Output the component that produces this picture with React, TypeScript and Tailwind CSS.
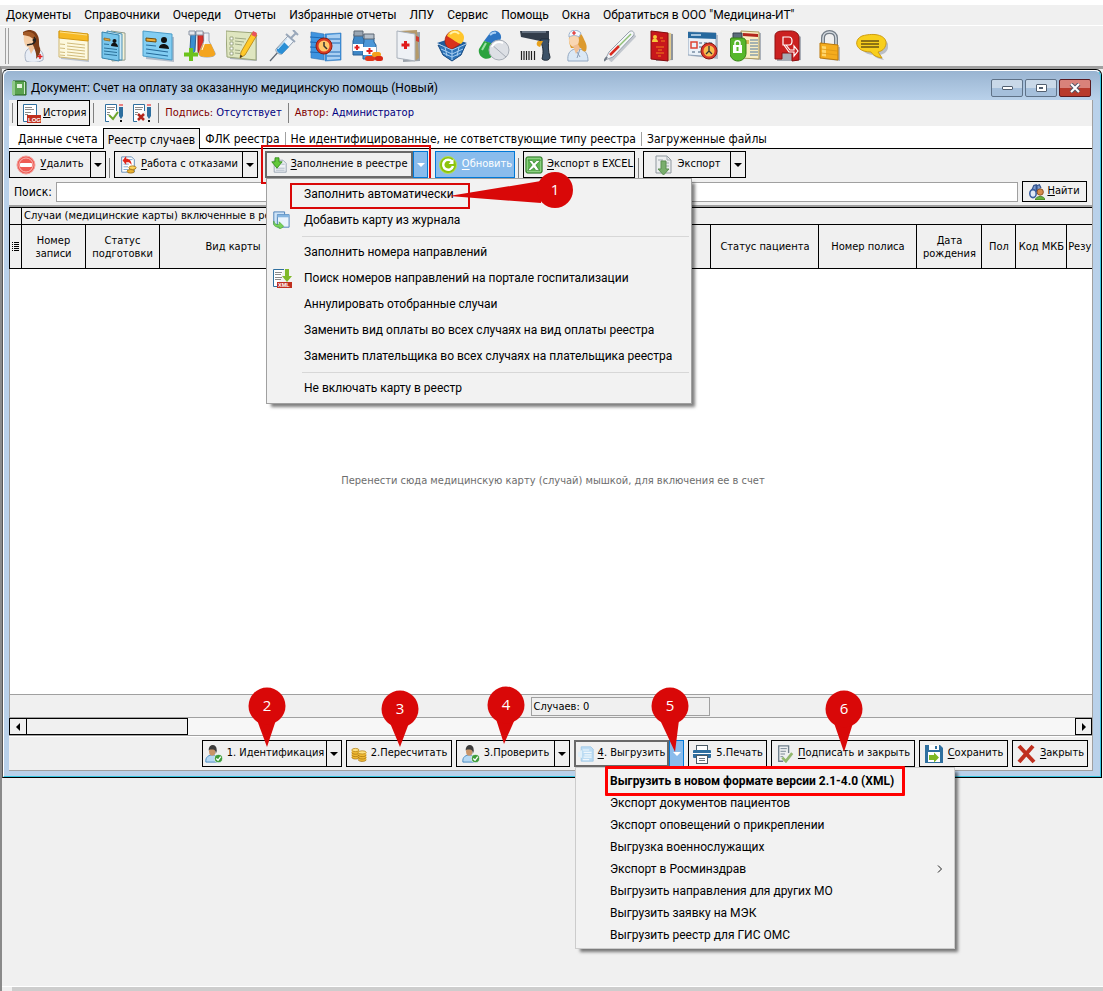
import type { ReactNode } from 'react';
import clsx from 'clsx';

const UI_FONT = "font-['Roboto','Open_Sans',sans-serif]";
const FORM_FONT = "font-['DejaVu_Sans_Condensed','DejaVu_Sans',sans-serif]";

const MENU = [
    'Документы',
    'Справочники',
    'Очереди',
    'Отчеты',
    'Избранные отчеты',
    'ЛПУ',
    'Сервис',
    'Помощь',
    'Окна',
    'Обратиться в ООО "Медицина-ИТ"',
];

/* ---------- main toolbar icons, 32x32 ---------- */

const TOOLBAR: { title: string; art: ReactNode }[] = [
    {
        title: 'Регистратура',
        art: (
            <>
                <path d="M10 31c-2-6-1-11 4-13l7 1c5 1 7 5 6 11-5 3-13 3-17 1z" fill="#e8edf5" stroke="#a9b4c6" />
                <path d="M12 16l3 8 4-7-1-4h-5z" fill="#f2c49c" />
                <path d="M7 2c6-4 13-2 15 4 2 5 0 8 2 12 1 4-1 8-4 11 1-5-1-8-2-12-2-3-2-9-3-11L7 5z" fill="#7b3c17" />
                <path d="M8 5c3-2 8-1 9 3 1 5-2 9-5 9s-5-6-4-12z" fill="#f6cfa8" />
                <path d="M7 3c6-3 12 0 13 5l-2 4c0-4-4-6-11-7z" fill="#a35a28" />
                <path d="M18 7c3 3 1 6-2 7l-5 1" fill="none" stroke="#222" strokeWidth="1.500" />
                <circle cx="18" cy="10" r="1.500" fill="#222" />
                <path d="M24 24v5M21.500 26.500h5" stroke="#e02020" strokeWidth="1.500" />
            </>
        ),
    },
    {
        title: 'Журнал',
        art: (
            <>
                <path d="M2 3l29 3v26L3 29z" fill="#b9c2cf" />
                <path d="M1 1l29 3v26L1 27z" fill="#fdf9df" stroke="#cfb670" />
                <path d="M1 1l29 3v7L1 8z" fill="#f7b923" stroke="#d79a12" />
                <path d="M2 2l27 3" stroke="#fde08a" />
                <path d="M2 14l5 .5M2 18l5 .5M2 22l5 .5M2 25l5 .5M9 13l18 2M9 16l18 2M9 19l18 2M9 22l18 2M9 25l18 2" stroke="#c5ab62" strokeWidth=".8" />
            </>
        ),
    },
    {
        title: 'Карты пациентов',
        art: (
            <>
                <path d="M11 1l14 2v27l-13 1z" fill="#f7f3d8" stroke="#8e9a8c" />
                <path d="M7 1l15 3v26L8 29z" fill="#cdeaf7" stroke="#4a8fb3" />
                <path d="M2 2l17 3v26L2 28z" fill="#79c6ec" stroke="#3784ad" />
                <path d="M4 8l6 1v2L4 10z" fill="#e6a73b" stroke="#875b13" strokeWidth=".7" />
                <circle cx="14.500" cy="11" r="2" fill="#111" />
                <path d="M11 16c0-5 7-4 7 1z" fill="#111" />
                <path d="M4 14l5 .5M4 18l13 1.500M4 21l13 1.500M4 24l13 1.500" stroke="#2b7199" />
            </>
        ),
    },
    {
        title: 'Карточка',
        art: (
            <>
                <path d="M3 4l29 3v25L4 29z" fill="#b0bbc9" />
                <path d="M1 1l29 3v26L1 26z" fill="#82cdf2" stroke="#4b9cc8" />
                <path d="M4 8l10 1v3L4 11z" fill="#f0ad36" stroke="#704a08" />
                <path d="M4 15l10 1M4 19l22 3M4 23l22 3" stroke="#266b9b" strokeWidth="1.200" />
                <circle cx="22" cy="10" r="3" fill="#111" />
                <path d="M17 18c0-6 10-5 10 1z" fill="#111" />
            </>
        ),
    },
    {
        title: 'Лаборатория',
        art: (
            <>
                <path d="M7 2h5l-1 18c0 4-5 3-5 0z" fill="#3a8fd0" stroke="#2b5f91" />
                <path d="M14 2h5l1 19c0 4-6 4-6 0z" fill="#d9302a" stroke="#8f1a17" />
                <path d="M5 1h6v4H5zM12 1h7v4h-7z" fill="#e5e8ee" stroke="#8d96a5" />
                <path d="M20 3h5v8l6 12c1 3-3 4-8 4s-9-1-8-4l5-12z" fill="#e9edf4" stroke="#9aa4b5" />
                <path d="M19 14h8l4 9c1 3-3 4-8 4s-9-1-8-4z" fill="#f4a51e" />
                <path d="M21 4v8l-3 8" fill="none" stroke="#fff" />
                <path d="M7 18v13M0 24.500h14" stroke="#6cc31d" strokeWidth="4" />
            </>
        ),
    },
    {
        title: 'Запись',
        art: (
            <>
                <path d="M3 4l28 1v26L4 29z" fill="#b0b6bd" />
                <path d="M0 1l30 2v27L1 27z" fill="#dfe6c0" stroke="#9ba679" />
                <path d="M4 7h3v3H4zM4 12h3v3H4zM4 17h3v3H4zM4 22h3v3H4z" fill="#fff" stroke="#8c9770" strokeWidth=".8" />
                <path d="M9 8l11 1M9 11l9 1M9 14l7 1M9 20l5 .5M9 23l5 .5" stroke="#9da885" />
                <path d="M26 3l5 2-12 20-5 3 1-6z" fill="#ffc928" stroke="#b37f10" strokeWidth=".8" />
                <path d="M27 1l4 2-1.500 4-4-2z" fill="#e9535c" />
                <path d="M14 28l.5-3 2 1z" fill="#222" />
            </>
        ),
    },
    {
        title: 'Процедуры',
        art: (
            <>
                <path d="M2 31l9-10" stroke="#5c6773" strokeWidth="1.200" />
                <path d="M8 19L20 6l6 5-12 13c-3 1-7-2-6-5z" fill="#eef4fa" stroke="#8c9aab" />
                <path d="M9 19l7-7 5 5-7 7c-3 0-6-3-5-5z" fill="#2a8fd6" />
                <path d="M10 19l9-10" stroke="#c7e4f8" />
                <path d="M23 8l5-5M25 0l5 5M18 4l9 8" stroke="#9aa8ba" strokeWidth="2" />
            </>
        ),
    },
    {
        title: 'Расписание',
        art: (
            <>
                <path d="M1 2l13 2v26L1 28zM15 4l16-1v27l-16 1z" fill="#3f94e0" stroke="#3074b5" strokeWidth=".6" />
                <path d="M17 5l13-1v25l-13 1z" fill="#a9cff2" />
                <path d="M0 7l14 1M0 12l14 1M0 17l14 1M0 22l14 1M17 9h13M17 13h13M17 22h13M17 26h13" stroke="#1c68b4" />
                <circle cx="14" cy="16" r="8" fill="#d93b23" stroke="#8e1f10" />
                <circle cx="14" cy="16" r="5.500" fill="#ffc76a" />
                <path d="M14 12v4l3 3" fill="none" stroke="#333" strokeWidth="1.500" />
            </>
        ),
    },
    {
        title: 'Аптека',
        art: (
            <>
                <path d="M2 4h9v4l2 3v14H1V11l1-3z" fill="#3e87c6" stroke="#275f94" />
                <path d="M2 1h9v5H2z" fill="#9aa6b3" stroke="#5c6773" />
                <path d="M12 8h10v4l2 3v14H11V15l1-3z" fill="#4b97d8" stroke="#275f94" />
                <path d="M12 4h10v5H12z" fill="#b5bfca" stroke="#5c6773" />
                <path d="M1 14h10v7H1zM11 17h13v8H11z" fill="#fff" />
                <path d="M5 15v5M2.500 17.500h5M17.500 18v6M14.500 21h6" stroke="#e02020" strokeWidth="2" />
                <rect x="13" y="26" width="10" height="5" rx="2.500" fill="#e23a1c" />
                <rect x="20" y="22" width="9" height="5" rx="2.500" fill="#f5a01c" />
                <rect x="23" y="26" width="8" height="5" rx="2.500" fill="#d82716" />
            </>
        ),
    },
    {
        title: 'Медкарта',
        art: (
            <>
                <path d="M9 3l17-1v29l-17 1z" fill="#9aa1a9" />
                <path d="M5 1l18-1 2 28-4 3z" fill="#b49a6a" />
                <path d="M3 1l18 3v27L3 28z" fill="#eef1f5" stroke="#a8b0ba" />
                <path d="M22 6l3 1v5l-3-1z" fill="#d23a2c" />
                <path d="M11.500 11v8M7.500 15h8" stroke="#e01b1b" strokeWidth="3" />
            </>
        ),
    },
    {
        title: 'Заказ лекарств',
        art: (
            <>
                <path d="M2 15l14 4 14-5-5 11-9 6-9-6z" fill="#2e74b8" stroke="#184a80" />
                <path d="M1 13l15-5 15 5-15 7z" fill="#1f5c9c" />
                <path d="M9 11c0-8 8-13 15-9 5 4 2 9-1 13l-7 4c-4 0-7-4-7-8z" fill="#d8311c" stroke="#982012" strokeWidth=".7" />
                <path d="M11 6c3-7 10-7 14-4s4 8 0 12c-4-1-7-4-14-8z" fill="#ffc62c" />
                <path d="M14 4c3-3 7-3 9 0" fill="none" stroke="#fff1a8" strokeWidth="2" />
                <path d="M2 14l14 6 14-6M5 19l11 5 11-5M7 23l9 4 9-4M16 19v11M9 17l2 9M23 17l-2 9" fill="none" stroke="#a6cdf0" />
            </>
        ),
    },
    {
        title: 'Медикаменты',
        art: (
            <>
                <path d="M6 11L12 3c4-5 12-1 11 5l-3 8z" fill="#2d75c3" />
                <path d="M1 19L6 11l14 4-5 10C10 33-1 27 1 19z" fill="#2aa33d" />
                <path d="M4 20l4-7" stroke="#9be1a4" strokeWidth="2" />
                <path d="M12 5c2-2 4-3 6-2" fill="none" stroke="#a8cff4" strokeWidth="2" />
                <circle cx="21" cy="20" r="10" fill="#dde0e5" stroke="#a7adb6" />
                <path d="M13 14l15 13" stroke="#a4aab3" />
                <path d="M14 17c2-5 7-6 11-4" fill="none" stroke="#fff" strokeWidth="2" />
            </>
        ),
    },
    {
        title: 'Сканер',
        art: (
            <>
                <path d="M0 1h29v8l-9 2L1 7z" fill="#333d4a" />
                <path d="M2 2h24" stroke="#788594" strokeWidth="1.500" />
                <path d="M21 9h8c-1 6-1 12 1 18 0 4-6 4-8 2 2-8 1-13-2-18z" fill="#3c5268" stroke="#1f2b38" />
                <path d="M18 11c-2 2-2 5 2 6l3-6z" fill="#e7a11d" />
                <path d="M1.500 21v9M4 21v9M6.500 21v9M9 21v9M11.500 21v9M14.500 21v9" stroke="#222" strokeWidth="1.200" />
            </>
        ),
    },
    {
        title: 'Медсестра',
        art: (
            <>
                <path d="M6 31c-1-7 2-11 7-12h5c6 1 8 6 8 12z" fill="#dbe8f5" stroke="#92a8c2" />
                <path d="M8 4c5-4 11-2 13 3s5 8 3 14c-2 1-4 0-5-3H9C7 13 6 8 8 4z" fill="#dc9a2f" />
                <ellipse cx="12" cy="10" rx="5" ry="7" fill="#f9d6b2" />
                <path d="M11 16l3 8 4-6-2-4z" fill="#f0bf95" />
                <path d="M7 7C6 0 14-2 19 3l-2 4c-3-2-6-2-10 0z" fill="#f5f9ff" stroke="#9db3ce" />
                <path d="M12 1v4M10 3h4" stroke="#e02020" strokeWidth="1.200" />
                <path d="M15 22l3 5M18 19l-3 9" stroke="#8c9fb9" />
            </>
        ),
    },
    {
        title: 'Термометр',
        art: (
            <>
                <path d="M6 31L31 5" stroke="#c2c7ce" strokeWidth="4" />
                <path d="M1 30l4-8L25 2c3-3 7 1 4 4L9 27z" fill="#f3f6f9" stroke="#98a1ad" />
                <path d="M6 25l9-9" stroke="#d92b20" strokeWidth="2.500" />
                <path d="M15 16L27 4" stroke="#8fbf74" strokeWidth="1.500" />
                <path d="M0 31l3-4" stroke="#6e7782" strokeWidth="2" />
            </>
        ),
    },
    {
        title: 'Справочник МКБ',
        art: (
            <>
                <path d="M8 2l19 2v26l-17 1z" fill="#8f949b" />
                <path d="M7 1l18 2v26l-2 2z" fill="#e0c98e" />
                <path d="M5 1l17 2v28L5 29z" fill="#c8171b" stroke="#850d10" />
                <circle cx="9" cy="7" r="2" fill="#f6c93c" />
                <path d="M6 12c0-5 6-4 6 0z" fill="#f6c93c" />
                <path d="M14 8h3M15 11h4M10 17h8M12 20h4M10 23h8M12 26h3" stroke="#f0801a" />
            </>
        ),
    },
    {
        title: 'Календарь',
        art: (
            <>
                <path d="M2 3l28 2v24L3 26z" fill="#b4bdc9" />
                <path d="M0 2l28 1v24L0 25z" fill="#eaf1f8" stroke="#8ea2b8" />
                <path d="M0 2l28 1v6L0 8z" fill="#27699e" />
                <path d="M3 5h10" stroke="#cfe3f3" strokeWidth="1.500" />
                <path d="M3 12h6v6H3z" fill="none" stroke="#de4433" strokeWidth="1.500" />
                <path d="M11 13h3M16 13h3M21 13h3M11 17h3M4 22h3M10 22h3" stroke="#7a8ea4" strokeWidth="1.500" />
                <circle cx="21" cy="21" r="8" fill="#d8372a" stroke="#871a12" />
                <circle cx="21" cy="21" r="5.500" fill="#f7bd4d" />
                <path d="M21 16v5l3 3M21 21l-3 3" fill="none" stroke="#333" strokeWidth="1.300" />
            </>
        ),
    },
    {
        title: 'Доступ к документам',
        art: (
            <>
                <path d="M12 3h19v27l-18-2z" fill="#aab0b9" />
                <path d="M11 1l18 1v27l-18-1z" fill="#f9edc2" stroke="#ab995e" />
                <path d="M13 3l15 1v3l-15-1z" fill="#b3261d" />
                <path d="M14 10h5v4h-5z" fill="#ddb458" />
                <path d="M20 10h8M20 13h8M20 16h8M20 19h8M20 22h8M20 25h8" stroke="#52799f" strokeWidth="1.200" />
                <path d="M3 3h9v6H3z" fill="#5c6c7a" stroke="#34414e" />
                <path d="M1 8h11c3 0 4 2 4 4v11c0 4-3 8-8 8s-8-4-8-8V11z" fill="#58b72b" stroke="#358213" />
                <path d="M3 15h9v8H3z" fill="#fff" />
                <path d="M5 15v-2c0-3 5-3 5 0v2" fill="none" stroke="#fff" strokeWidth="1.500" />
                <path d="M7.500 17v4" stroke="#58b72b" strokeWidth="2" />
            </>
        ),
    },
    {
        title: 'Реестр',
        art: (
            <>
                <path d="M5 31V8l7-6h11l6 5v23l-6 1z" fill="#a8adb6" />
                <path d="M3 29V6c0-4 4-5 8-5h8c5 0 8 3 8 7v22l-7 1v-8H10v6z" fill="#cb2020" stroke="#8f1010" />
                <path d="M11 13V7h6c4 0 4 8 0 8h-6v-2M14 15l4 5h4v-4l4 5-4 5v-4h-5l-5-7" fill="none" stroke="#fff" strokeWidth="1.200" />
            </>
        ),
    },
    {
        title: 'Блокировка',
        art: (
            <>
                <path d="M9 14V8c0-8 13-8 13 0v7" fill="none" stroke="#737c86" strokeWidth="4" />
                <path d="M9 14V8c0-8 13-8 13 0v7" fill="none" stroke="#d5dbe1" strokeWidth="1.500" />
                <path d="M8 15l18 2v14l-17-2z" fill="#b3b9c1" />
                <path d="M6 13l18 2v15L6 28z" fill="#f5ac1d" stroke="#bd7909" />
                <path d="M8 16l4 .5v10L8 26z" fill="#ffd66a" />
                <path d="M7 19l16 2M7 23l16 2" stroke="#dd9715" strokeWidth=".8" />
            </>
        ),
    },
    {
        title: 'Сообщения',
        art: (
            <>
                <path d="M8 8c16-4 26 2 24 10-1 4-4 6-8 7l4 5c-6-1-9-3-11-5C4 24 0 12 8 8z" fill="#b9bec7" />
                <path d="M6 6C20 2 31 6 30 14c-1 5-4 7-8 8l4 6c-6-1-9-3-11-6C-1 22-3 10 6 6z" fill="#f8cf1d" stroke="#cf9d10" />
                <path d="M5 11h18M5 14h18M5 17h18" stroke="#6b5510" strokeWidth="1.500" />
            </>
        ),
    },
];

/* ---------- small icons, drawn on a 20x20 grid ---------- */

function Svg({ children, className = 'size-5' }: { children: ReactNode; className?: string }) {
    return (
        <svg viewBox="0 0 20 20" className={clsx('shrink-0', className)} aria-hidden="true">
            {children}
        </svg>
    );
}

function LogIcon() {
    return (
        <Svg>
            <path d="M15.500 12V1.500h-13v17H7" fill="#fff" stroke="#2f6f9f" />
            <path d="M4 4.500h7M4 6.500h9M4 9.500h6M4 11.500h3" stroke="#8a8a8a" />
            <rect x="6" y="12" width="14" height="8" fill="#c0301f" />
            <text x="7" y="18.500" fontSize="6" fontWeight="700" fontFamily="Liberation Sans" fill="#fff">LOG</text>
        </Svg>
    );
}

function SignIcon({ ok }: { ok: boolean }) {
    return (
        <Svg>
            <path d="M12.500 8V1.500h-11v17H5" fill="#fff" stroke="#2f6f9f" />
            <path d="M3 4.500h8M3 6.500h7M3 9.500h3M3 11.500h2" stroke="#8a8a8a" />
            {ok ? (
                <path d="M5 12l4 4 5-7" fill="none" stroke="#6da52c" strokeWidth="2" />
            ) : (
                <path d="M6 11l6 6M12 11l-6 6" stroke="#b3261d" strokeWidth="2.500" />
            )}
            <path d="M15 1h4v2h-4z" fill="#e98080" />
            <path d="M15 4h4v9l-2 3-2-3z" fill="#2e6f9f" />
            <rect x="16" y="17" width="2" height="2" fill="#111" />
        </Svg>
    );
}

function DeleteIcon() {
    return (
        <Svg>
            <circle cx="10" cy="10" r="9" fill="#ee5c55" stroke="#f3a09b" />
            <circle cx="10" cy="10" r="7" fill="none" stroke="#f7b5b1" />
            <rect x="4" y="8" width="12" height="4" rx="1" fill="#fff" />
        </Svg>
    );
}

function RefusalIcon() {
    return (
        <Svg className="size-[18px]">
            <path d="M3 1h11l3 3v14H3z" fill="#fff" stroke="#5b87b5" />
            <path d="M5 9h6M5 12h5M5 15h5M11 4h4" stroke="#7aa2cc" />
            <path d="M4 5l4-5v3c4 0 6 3 6 7-2-3-3-3-6-3v3z" fill="#e0261c" />
            <ellipse cx="13" cy="17" rx="4" ry="2" fill="#eab22d" stroke="#a6741a" />
            <ellipse cx="15" cy="13" rx="4" ry="2" fill="#ffd65c" stroke="#a6741a" />
        </Svg>
    );
}

function FillIcon() {
    return (
        <Svg className="size-4">
            <path d="M4 4h11l4 4v11H4z" fill="#eef1f5" stroke="#8b98a8" />
            <path d="M6 14h11M6 16.500h11M13 9h4" stroke="#a3aebb" />
            <path d="M5 1h5v5h4l-6.500 8L1 6h4z" fill="#62c83a" stroke="#2b8513" />
        </Svg>
    );
}

function RefreshIcon() {
    return (
        <Svg>
            <circle cx="10" cy="10" r="8.500" fill="#8cc40c" stroke="#b5dd5c" />
            <path d="M14 6.500A5 5 0 1 0 15 11" fill="none" stroke="#fff" strokeWidth="2.500" />
            <path d="M15.500 4v5h-5z" fill="#fff" />
        </Svg>
    );
}

function ExcelIcon() {
    return (
        <Svg className="size-[18px]">
            <rect x="1" y="1" width="18" height="18" rx="2" fill="#5cb350" stroke="#1b6914" />
            <rect x="2.500" y="2.500" width="15" height="15" rx="1" fill="none" stroke="#a4dc9b" />
            <path d="M4 5h4l2 3 3-3h4l-5 5 4 6h-4l-2-3-4 3H3l5-6z" fill="#fff" stroke="#1b6914" strokeWidth=".6" />
        </Svg>
    );
}

function ExportIcon() {
    return (
        <Svg>
            <path d="M2 1h11l4 4v13H2z" fill="#eceeef" stroke="#8f979e" />
            <path d="M13 1v4h4M4 5h5M12 8h3M12 11h3" fill="none" stroke="#a1a9b0" />
            <path d="M7 6h5v8h3l-5.500 6L4 14h3z" fill="#79ae6d" stroke="#5d8f53" />
        </Svg>
    );
}

function FindIcon() {
    return (
        <Svg className="size-4">
            <path d="M3 9l3-7 3-1v9M10 9V2l3-1 2 4" fill="#7b9bd0" stroke="#34548e" strokeWidth="1.500" />
            <ellipse cx="5" cy="12" rx="4" ry="5" fill="#dfe8f5" stroke="#3a5fa0" strokeWidth="2" />
            <circle cx="14" cy="10" r="4" fill="#d68b4b" stroke="#7c4217" />
            <path d="M8 20c0-6 12-6 12 0z" fill="#67b03b" stroke="#35701a" />
        </Svg>
    );
}

function CopyIcon() {
    return (
        <Svg className="size-[18px]">
            <path d="M2 1h12v14H2z" fill="#cfe4f7" stroke="#447bb3" />
            <path d="M6 4h13v14H6z" fill="#eaf4fd" stroke="#447bb3" />
            <path d="M6 4h13v3H6z" fill="#85b5e0" />
            <path d="M2 11c1 4 3 4 6 4v-3l5 5-5 4v-3c-5 0-7-2-6-7z" fill="#79d35b" stroke="#3f9a28" strokeWidth=".6" />
        </Svg>
    );
}

function XmlIcon() {
    return (
        <Svg>
            <path d="M12 1.500H1.500v17H5" fill="#fff" stroke="#2f6f9f" />
            <path d="M3 4.500h7M3 6.500h6M3 9.500h7M3 11.500h6" stroke="#8a8a8a" />
            <path d="M13 1h4v7h3l-5 6-5-6h3z" fill="#80b92a" />
            <rect x="5" y="14" width="15" height="6" fill="#c0301f" />
            <text x="6" y="19" fontSize="5.500" fontWeight="700" fontFamily="Liberation Sans" fill="#fff">XML</text>
        </Svg>
    );
}

function UserCheckIcon() {
    return (
        <Svg className="size-[18px]">
            <path d="M1 19c-1-6 4-8 7-8s7 1 9 8z" fill="#b5d8f3" stroke="#3f86c0" />
            <ellipse cx="8" cy="7" rx="3.500" ry="5" fill="#c99467" />
            <path d="M4 6c0-8 10-8 9 1l-1 3c0-4-1-5-4-5-2 0-3 0-4 1z" fill="#3c3c3c" />
            <circle cx="15" cy="15" r="4.500" fill="#3d9c3a" stroke="#fff" strokeWidth=".7" />
            <path d="M12.500 15l2 2 3-4" fill="none" stroke="#fff" strokeWidth="1.500" />
        </Svg>
    );
}

function CoinsIcon() {
    return (
        <Svg className="size-4">
            <path d="M1 5v9c0 3 9 3 9 0V5z" fill="#f0ba34" />
            <path d="M9 8v9c0 3 10 3 10 0V8z" fill="#f0ba34" />
            <path d="M1 8c0 3 9 3 9 0M1 11c0 3 9 3 9 0M1 14c0 3 9 3 9 0M9 11c0 3 10 3 10 0M9 14c0 3 10 3 10 0M9 17c0 3 10 3 10 0" fill="none" stroke="#a8740f" />
            <ellipse cx="5.500" cy="5" rx="4.500" ry="2" fill="#ffe281" stroke="#b98517" />
            <ellipse cx="14" cy="8" rx="5" ry="2" fill="#ffe281" stroke="#b98517" />
        </Svg>
    );
}

function UploadIcon() {
    return (
        <Svg className="size-4">
            <path d="M4 1h12l3 3v15H4z" fill="#bcdcf3" stroke="#9cc6e6" />
            <path d="M6 5h8M7 8h10M8 11h9M7 14h10M6 17h8" stroke="#eef7fd" strokeWidth="1.500" />
            <path d="M0 8l5-3v10l-5-2z" fill="#e0f0fa" />
        </Svg>
    );
}

function PrinterIcon() {
    return (
        <Svg>
            <rect x="4.500" y="1.500" width="11" height="6" fill="#fff" stroke="#4c5b66" />
            <rect x="1" y="6" width="18" height="8" rx="1" fill="#2e6f9f" />
            <rect x="4.500" y="11.500" width="11" height="8" fill="#fff" stroke="#4c5b66" />
            <path d="M7 14.500h6M7 16.500h6" stroke="#6b7780" />
            <path d="M1 9.500h18" stroke="#fff" />
        </Svg>
    );
}

function SignCloseIcon() {
    return (
        <Svg className="size-[18px]">
            <path d="M14 9V1H3v17h5" fill="#eef0f1" stroke="#6f7f8b" strokeWidth="1.500" />
            <path d="M5 4h7M5 7h6M5 10h5M5 13h3" stroke="#6f7f8b" />
            <path d="M7 14l4 4 7-9" fill="none" stroke="#93b86f" strokeWidth="3" />
        </Svg>
    );
}

function SaveIcon() {
    return (
        <Svg>
            <path d="M1 1h15l3 3v15H1z" fill="#2e6f9f" />
            <rect x="5" y="1" width="10" height="5" fill="#fff" />
            <rect x="11" y="2" width="2" height="3" fill="#2e6f9f" />
            <rect x="4" y="8" width="12" height="10" fill="#fff" />
            <path d="M5 11h5V8.500l5 5-5 5V16H5z" fill="#7eb824" />
        </Svg>
    );
}

function CrossIcon() {
    return (
        <Svg>
            <path d="M3 2l15 16M17 2L3 18" stroke="#c0301f" strokeWidth="4" />
        </Svg>
    );
}

/* ---------- building blocks ---------- */

function Arrow({ className }: { className?: string }) {
    return (
        <svg viewBox="0 0 8 4" className={clsx('w-2 h-1', className)} aria-hidden="true">
            <path d="M0 0h8L4 4z" fill="currentColor" />
        </svg>
    );
}

interface FormButtonProps {
    icon: ReactNode;
    accel?: string;
    label: string;
    split?: boolean;
    /** menu of the split half is open */
    open?: boolean;
    hot?: boolean;
    className?: string;
    children?: ReactNode;
}

function FormButton({ icon, accel, label, split, open, hot, className, children }: FormButtonProps) {
    return (
        <div className={clsx('relative flex h-[27px] shrink-0', className)}>
            <button
                className={clsx(
                    'flex flex-1 items-center justify-center gap-1 whitespace-nowrap border',
                    open ? 'border-2 border-[#696969]' : hot ? 'border-[#0078d7] bg-[#8abcec] text-white' : 'border-black'
                )}
            >
                {icon}
                <span>
                    {accel && <u className="underline-offset-2">{accel}</u>}
                    {label}
                </span>
            </button>
            {split && (
                <button
                    aria-label={`${accel ?? ''}${label}: меню`}
                    className={clsx(
                        'flex w-[15px] items-center justify-center border',
                        open ? 'border-[#0078d7] bg-[#8abcec] text-white' : 'border-l-0 border-black'
                    )}
                >
                    <Arrow />
                </button>
            )}
            {children}
        </div>
    );
}

function Separator() {
    return <div className="mx-[3px] h-5 w-px shrink-0 bg-[#808080]" />;
}

/** Numbered marker; `reach` and `lean` place the tip relative to the circle's centre. */
function Pin({ n, className, reach, lean = 0 }: { n: number; className: string; reach: number; lean?: number }) {
    return (
        <svg viewBox="0 0 38 66" className={clsx('pointer-events-none absolute z-30 h-[66px] w-[38px]', className)}>
            <path d={`M9 33L${19 + lean} ${19 + reach} 28 33z`} fill="#d90808" />
            <circle cx="19" cy="19" r="18.500" fill="#d90808" />
            <text x="19" y="24" textAnchor="middle" fontSize="15" fontFamily="Open Sans" fill="#fff">
                {n}
            </text>
        </svg>
    );
}

const FILL_MENU: ({ label: string; icon?: ReactNode } | null)[] = [
    { label: 'Заполнить автоматически' },
    { label: 'Добавить карту из журнала', icon: <CopyIcon /> },
    null,
    { label: 'Заполнить номера направлений' },
    { label: 'Поиск номеров направлений на портале госпитализации', icon: <XmlIcon /> },
    { label: 'Аннулировать отобранные случаи' },
    { label: 'Заменить вид оплаты во всех случаях на вид оплаты реестра' },
    { label: 'Заменить плательщика во всех случаях на плательщика реестра' },
    null,
    { label: 'Не включать карту в реестр' },
];

function FillMenu() {
    return (
        <div
            className={clsx(
                'absolute left-px top-[27px] z-20 w-[426px] border border-[#a0a0a0] bg-[#f2f2f2] py-[2px] text-xs shadow-[4px_4px_3px_-1px_rgba(0,0,0,0.5)]',
                UI_FONT
            )}
        >
            {FILL_MENU.map((item, i) =>
                item ? (
                    <button key={item.label} className="flex h-[26px] w-full items-center whitespace-nowrap text-left">
                        <span className="flex w-[37px] items-center pl-[5px]">{item.icon}</span>
                        {item.label}
                    </button>
                ) : (
                    <div key={i} className="ml-[35px] mr-[2px] flex h-[6px] items-center">
                        <div className="h-px flex-1 bg-[#d7d7d7]" />
                    </div>
                )
            )}
            <div className="pointer-events-none absolute left-[23px] top-1 h-[26px] w-[180px] border-2 border-[#d90808]" />
            <svg viewBox="0 0 126 38" className="pointer-events-none absolute -top-2 left-[182px] h-[38px] w-[126px]">
                <path d="M0 25L92 10v22z" fill="#d90808" />
                <circle cx="106" cy="19" r="18" fill="#d90808" />
                <text x="106" y="24" textAnchor="middle" fontSize="15" fontFamily="Open Sans" fill="#fff">
                    1
                </text>
            </svg>
        </div>
    );
}

const EXPORT_MENU = [
    'Выгрузить в новом формате версии 2.1-4.0 (XML)',
    'Экспорт документов пациентов',
    'Экспорт оповещений о прикреплении',
    'Выгрузка военнослужащих',
    'Экспорт в Росминздрав',
    'Выгрузить направления для других МО',
    'Выгрузить заявку на МЭК',
    'Выгрузить реестр для ГИС ОМС',
];

function ExportMenu() {
    return (
        <div
            className={clsx(
                'absolute left-px top-[27px] z-20 w-[380px] border border-[#ccc] bg-[#f2f2f2] py-[2px] text-xs shadow-[4px_4px_3px_-1px_rgba(0,0,0,0.5)]',
                UI_FONT
            )}
        >
            {EXPORT_MENU.map((label, i) => (
                <button
                    key={label}
                    className={clsx(
                        'flex h-[22px] w-full items-center justify-between whitespace-nowrap pl-[34px] pr-3 text-left',
                        i === 0 && 'font-bold'
                    )}
                >
                    {label}
                    {label === 'Экспорт в Росминздрав' && (
                        <svg viewBox="0 0 5 8" className="h-2 w-[5px]" aria-hidden="true">
                            <path d="M1 0.500L4.500 4 1 7.500" fill="none" stroke="#222" />
                        </svg>
                    )}
                </button>
            ))}
            <div className="pointer-events-none absolute -top-[2px] left-[29px] h-[30px] w-[300px] rounded-[1px] border-3 border-[#f00]" />
        </div>
    );
}

/* ---------- document window ---------- */

const TABS = [
    'Данные счета',
    'Реестр случаев',
    'ФЛК реестра',
    'Не идентифицированные, не сответствующие типу реестра',
    'Загруженные файлы',
];

const COLUMNS = [
    { label: 'Номер записи', width: 'w-16' },
    { label: 'Статус подготовки', width: 'w-[74px]' },
    { label: 'Вид карты', width: 'w-[147px]' },
    { label: '', width: 'w-auto' },
    { label: 'Статус пациента', width: 'w-[108px]' },
    { label: 'Номер полиса', width: 'w-[98px]' },
    { label: 'Дата рождения', width: 'w-[65px]' },
    { label: 'Пол', width: 'w-[34px]' },
    { label: 'Код МКБ', width: 'w-[51px]' },
    { label: 'Резу', width: 'w-[25px]' },
];

function TitleBar() {
    return (
        <div className={clsx('flex h-[29px] items-center pl-[7px] pr-[9px] pt-[5px] text-xs', UI_FONT)}>
            <svg viewBox="0 0 16 16" className="mr-1 size-4" aria-hidden="true">
                <path d="M2 1h11l2 1v13H2z" fill="#5aa350" stroke="#22601f" />
                <path d="M1 1h3v14H1z" fill="#8fc98a" />
                <path d="M6 4h5v4H6z" fill="#e1f2dc" />
                <path d="M13.500 2v12" stroke="#cfe8ca" />
            </svg>
            <h1 className="flex-1">Документ: Счет на оплату за оказанную медицинскую помощь (Новый)</h1>
            <div className="flex gap-[2px]">
                <button aria-label="Свернуть" className="flex h-[18px] w-8 items-center justify-center rounded-[2px] border border-[#5f7288] bg-linear-to-b from-[#c9d8e8] from-50% to-[#a5bfdb] to-50%">
                    <span className="h-1 w-[11px] rounded-[1px] border border-[#525f70] bg-white" />
                </button>
                <button aria-label="Развернуть" className="flex h-[18px] w-8 items-center justify-center rounded-[2px] border border-[#5f7288] bg-linear-to-b from-[#c9d8e8] from-50% to-[#a5bfdb] to-50%">
                    <span className="flex h-2 w-[11px] items-center justify-center rounded-[1px] border border-[#525f70] bg-white">
                        <span className="h-[2px] w-1 bg-[#525f70]" />
                    </span>
                </button>
                <button aria-label="Закрыть окно" className="flex h-[18px] w-8 items-center justify-center rounded-[2px] border border-[#5a1a20] bg-linear-to-b from-[#d9827a] from-50% to-[#b83a2c] to-50%">
                    <svg viewBox="0 0 12 10" className="h-[10px] w-3" aria-hidden="true">
                        <path d="M2 1l8 8M10 1L2 9" stroke="#535666" strokeWidth="4" />
                        <path d="M2 1l8 8M10 1L2 9" stroke="#fff" strokeWidth="2" />
                    </svg>
                </button>
            </div>
        </div>
    );
}

function CasesTable() {
    return (
        <table className="w-full table-fixed border-collapse border-y border-black bg-[#f0f0f0]">
            <colgroup>
                <col className="w-3" />
                {COLUMNS.map((c) => (
                    <col key={c.label} className={c.width} />
                ))}
            </colgroup>
            <thead>
                <tr className="h-[17px]">
                    <th className="border border-black" />
                    <th colSpan={10} className="border-b border-black px-[2px] text-left font-normal leading-4">
                        Случаи (медицинские карты) включенные в реестр
                    </th>
                </tr>
                <tr className="h-[44px]">
                    <th className="border border-black p-0">
                        <svg viewBox="0 0 7 9" className="mx-auto h-[9px] w-[7px]" shapeRendering="crispEdges" aria-hidden="true">
                            <path d="M0 .5h1M2 .5h5M0 2.500h1M2 2.500h5M0 4.500h1M2 4.500h5M0 6.500h1M2 6.500h5M0 8.500h1M2 8.500h5" stroke="#000" />
                        </svg>
                    </th>
                    {COLUMNS.map((c, i) => (
                        <th
                            key={c.label}
                            className={clsx(
                                'overflow-hidden border border-black p-0 text-center font-normal leading-[13px]',
                                i === COLUMNS.length - 1 && 'border-r-0'
                            )}
                        >
                            {c.label}
                        </th>
                    ))}
                </tr>
            </thead>
        </table>
    );
}

function DocumentWindow() {
    return (
        <section className="mr-px rounded-t-md border border-black border-l-[#555] bg-[#b9d1ea]">
            <div className="rounded-t-md border border-[#35c5e0] border-l-white border-t-white bg-linear-to-b from-[#99b4d1] to-[#b9d1ea] to-[29px] pb-[5px]">
                <TitleBar />
                <div className={clsx('ml-[5px] mr-[7px] border-b border-r border-[#a0a0a0] bg-[#f0f0f0] text-[11px]', FORM_FONT)}>
                    <div className="flex h-[26px] items-center">
                        <Separator />
                        <button className="ml-px flex h-[26px] items-center gap-[2px] border border-black px-[3px]">
                            <LogIcon />
                            <span><u>И</u>стория</span>
                        </button>
                        <Separator />
                        <button aria-label="Подписать" className="ml-[7px]"><SignIcon ok /></button>
                        <button aria-label="Снять подпись" className="ml-2"><SignIcon ok={false} /></button>
                        <div className="mx-[6px] h-5 w-px bg-[#808080]" />
                        <span className="text-[#800000]">Подпись:&nbsp;</span>
                        <span className="text-[#000080]">Отсутствует</span>
                        <div className="mx-[6px] h-5 w-px bg-[#808080]" />
                        <span className="text-[#800000]">Автор:&nbsp;</span>
                        <span className="text-[#000080]">Администратор</span>
                    </div>

                    <div role="tablist" className="flex h-[23px] items-end border-b border-black bg-white pl-1 text-xs">
                        {TABS.map((tab, i) => (
                            <div key={tab} className="flex items-end">
                                <button
                                    role="tab"
                                    aria-selected={i === 1}
                                    className={clsx(
                                        'h-5 whitespace-nowrap pt-[2px]',
                                        i === 1 ? '-mb-px h-[21px] border border-b-0 border-black bg-[#f0f0f0] px-1' : 'px-[5px]'
                                    )}
                                >
                                    {tab}
                                </button>
                                {(i === 2 || i === 3) && <div className="mb-[2px] h-[14px] w-px bg-[#a0a0a0]" />}
                            </div>
                        ))}
                    </div>

                    <div className="flex h-[29px] items-end">
                        <FormButton icon={<DeleteIcon />} accel="У" label="далить" split className="w-[97px]" />
                        <Separator />
                        <FormButton icon={<RefusalIcon />} accel="Р" label="абота с отказами" split className="ml-px w-[144px]" />
                        <Separator />
                        <FormButton icon={<FillIcon />} accel="З" label="аполнение в реестре" split open className="w-[163px]">
                            <FillMenu />
                            <div className="pointer-events-none absolute -left-1 -top-[6px] z-10 h-[39px] w-[170px] border-2 border-[#d90808]" />
                        </FormButton>
                        <FormButton icon={<RefreshIcon />} accel="О" label="бновить" hot className="ml-[7px] w-20" />
                        <Separator />
                        <FormButton icon={<ExcelIcon />} accel="Э" label="кспорт в EXCEL" className="ml-px w-[112px]" />
                        <Separator />
                        <FormButton icon={<ExportIcon />} label="Экспорт" split className="ml-px w-[103px]" />
                    </div>

                    <div className="flex h-[29px] items-center border-b-2 border-[#a0a0a0] px-[5px]">
                        <label htmlFor="search" className="mr-1 text-xs">Поиск:</label>
                        <input id="search" className="h-5 min-w-0 flex-1 border border-[#a0a0a0] bg-white px-1 outline-none" />
                        <button className="ml-1 flex h-[21px] w-[65px] items-center justify-center gap-[2px] border border-black">
                            <FindIcon />
                            <span><u>Н</u>айти</span>
                        </button>
                    </div>

                    <CasesTable />
                    <div className="flex min-h-[425px] items-center justify-center border-l border-[#a0a0a0] bg-white pl-1 text-[#6d6d6d]">
                        Перенести сюда медицинскую карту (случай) мышкой, для включения ее в счет
                    </div>
                    <div className="flex h-6 items-center justify-center border-y border-l border-[#a0a0a0]">
                        <div className="ml-[138px] h-[19px] w-[179px] border border-[#a0a0a0] px-[2px] leading-[17px]">Случаев: 0</div>
                    </div>
                    <div className="flex h-[18px] border-b border-[#a0a0a0] bg-[#f7f7f7]">
                        <button aria-label="Влево" className="flex w-[18px] items-center justify-center border border-black bg-[#f0f0f0]">
                            <Arrow className="rotate-90" />
                        </button>
                        <div className="w-[161px] border border-l-0 border-black bg-[#f0f0f0]" />
                        <div className="flex-1" />
                        <button aria-label="Вправо" className="flex w-[17px] items-center justify-center border border-black bg-[#f0f0f0]">
                            <Arrow className="-rotate-90" />
                        </button>
                    </div>

                    <div className="flex h-[34px] items-center justify-end gap-1 border-t border-white pr-1">
                        <FormButton icon={<UserCheckIcon />} label="1. Идентификация" split className="w-[140px]">
                            <Pin n={2} reach={41} className="-top-[53px] left-[46px]" />
                        </FormButton>
                        <FormButton icon={<CoinsIcon />} label="2.Пересчитать" className="w-[106px]">
                            <Pin n={3} reach={38} className="-top-[50px] left-[35px]" />
                        </FormButton>
                        <FormButton icon={<UserCheckIcon />} label="3.Проверить" split className="w-[114px]">
                            <Pin n={4} reach={39} lean={-2} className="-top-[54px] left-[31px]" />
                        </FormButton>
                        <FormButton icon={<UploadIcon />} accel="4" label=". Выгрузить" split open className="w-[110px]">
                            <ExportMenu />
                            <Pin n={5} reach={46} lean={5} className="-top-[53px] left-[77px]" />
                        </FormButton>
                        <FormButton icon={<PrinterIcon />} label="5.Печать" className="w-[79px]" />
                        <FormButton icon={<SignCloseIcon />} accel="П" label="одписать и закрыть" className="w-[144px]">
                            <Pin n={6} reach={43} className="-top-[50px] left-[54px]" />
                        </FormButton>
                        <FormButton icon={<SaveIcon />} accel="С" label="охранить" className="w-[89px]" />
                        <FormButton icon={<CrossIcon />} accel="З" label="акрыть" className="w-[76px]" />
                    </div>
                </div>
            </div>
        </section>
    );
}

export default function App() {
    return (
        <div className="flex min-h-screen flex-col overflow-hidden bg-[#f0f0f0] text-black">
            <div className="h-[5px] bg-white" />
            <nav className={clsx('flex h-[21px] items-center gap-[13px] border-b border-white pl-[6px] text-xs', UI_FONT)}>
                {MENU.map((item) => (
                    <button key={item} className="whitespace-nowrap">{item}</button>
                ))}
            </nav>
            <div className="flex h-10 items-center pl-[5px]">
                <div className="h-9 w-1 border-x border-[#a0a0a0]" />
                {TOOLBAR.map(({ title, art }) => (
                    <button key={title} title={title} className="flex w-[42px] shrink-0 justify-center pl-[4px]">
                        <svg viewBox="0 0 32 32" className="size-8" aria-hidden="true">{art}</svg>
                    </button>
                ))}
            </div>
            <main className="flex flex-1 flex-col border-l-2 border-t-3 border-l-[#8a8a8a] border-t-[#a0a0a0]">
                <DocumentWindow />
                <div className="flex-1" />
                <div className="h-[5px] border-t border-white pl-[10px]">
                    <div className="h-full bg-[#cdcdcd]" />
                </div>
            </main>
        </div>
    );
}
